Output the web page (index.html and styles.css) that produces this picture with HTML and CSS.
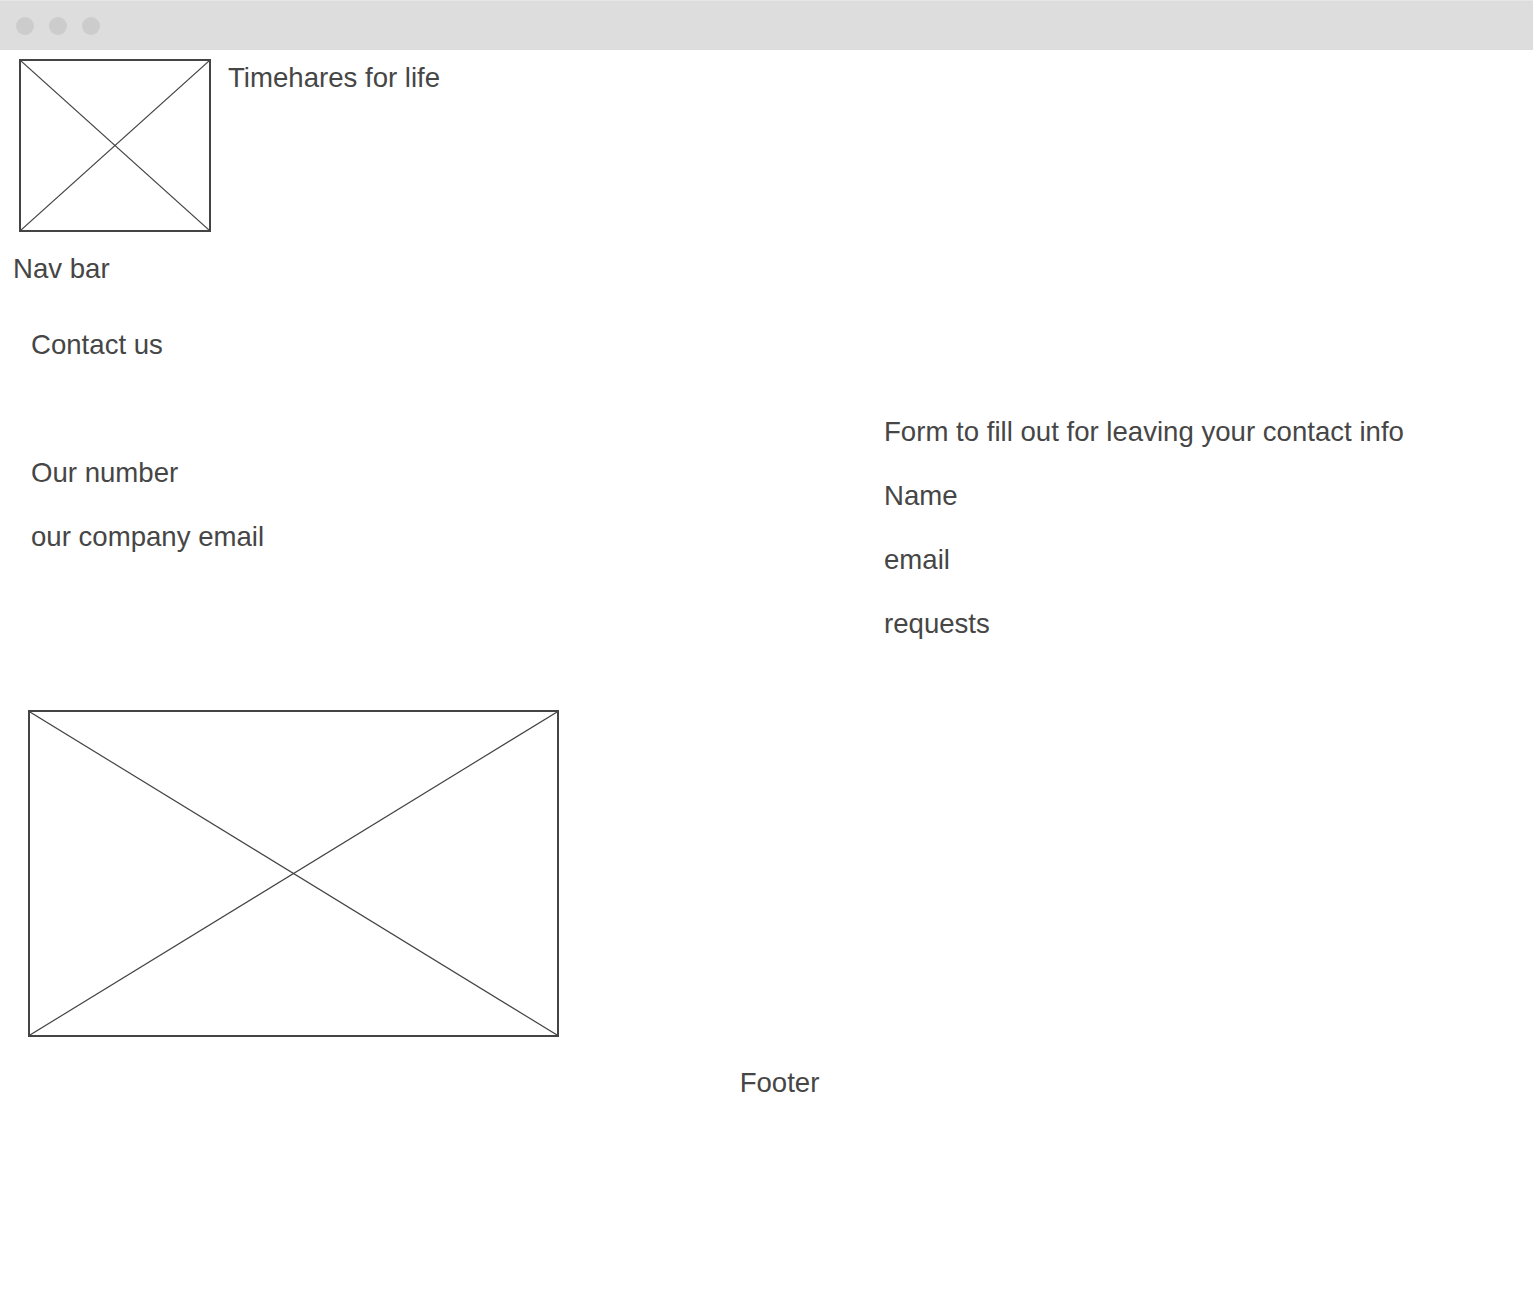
FILE: index.html
```html
<!DOCTYPE html>
<html lang="en">
<head>
<meta charset="utf-8">
<title>Timehares for life - Contact us</title>
<link rel="stylesheet" href="styles.css">
</head>
<body>
<div class="titlebar">
  <span class="dot"></span><span class="dot"></span><span class="dot"></span>
</div>
<header class="header">
  <div class="ph ph-logo">
    <svg viewBox="0 0 100 100" preserveAspectRatio="none"><line x1="0" y1="0" x2="100" y2="100" vector-effect="non-scaling-stroke"/><line x1="100" y1="0" x2="0" y2="100" vector-effect="non-scaling-stroke"/></svg>
  </div>
  <div class="title">Timehares for life</div>
</header>
<nav class="nav">Nav bar</nav>
<section class="contact">
  <div class="col-left">
    <div class="txt">Contact us</div>
    <div class="txt info-first">Our number</div>
    <div class="txt info">our company email</div>
  </div>
  <div class="col-right">
    <div class="txt">Form to fill out for leaving your contact info</div>
    <div class="txt info">Name</div>
    <div class="txt info">email</div>
    <div class="txt info">requests</div>
  </div>
</section>
<div class="ph ph-big">
  <svg viewBox="0 0 100 100" preserveAspectRatio="none"><line x1="0" y1="0" x2="100" y2="100" vector-effect="non-scaling-stroke"/><line x1="100" y1="0" x2="0" y2="100" vector-effect="non-scaling-stroke"/></svg>
</div>
<footer class="footer">Footer</footer>
</body>
</html>
```
FILE: styles.css
```css
html, body {
  margin: 0;
  padding: 0;
  background: #ffffff;
}
body {
  font-family: "Liberation Sans", Arial, sans-serif;
  font-size: 27.6px;
  line-height: 32px;
  color: #464646;
  min-height: 1294px;
}
.titlebar {
  height: 50px;
  background: #dddddd;
  border-top: 1px solid #e6e6e6;
  display: flex;
  align-items: center;
  gap: 15px;
  padding-left: 16px;
  box-sizing: border-box;
}
.dot {
  width: 18px;
  height: 18px;
  border-radius: 50%;
  background: #cccccc;
}
.header {
  display: flex;
  align-items: flex-start;
  padding: 9px 0 0 19px;
}
.ph {
  border: 2px solid #444444;
  box-sizing: border-box;
}
.ph svg {
  display: block;
  width: 100%;
  height: 100%;
}
.ph line {
  stroke: #444444;
  stroke-width: 1.2px;
}
.ph-logo {
  width: 192px;
  height: 173px;
}
.title {
  margin: 3px 0 0 17px;
}
.nav {
  margin-top: 21px;
  padding-left: 13px;
}
.contact {
  display: grid;
  grid-template-columns: 853px 1fr;
  padding-left: 31px;
  margin-top: 44px;
}
.txt {
  white-space: nowrap;
}
.info-first {
  margin-top: 96px;
}
.info {
  margin-top: 32px;
}
.col-right {
  margin-top: 87px;
}
.ph-big {
  width: 531px;
  height: 327px;
  margin: 70px 0 0 28px;
}
.footer {
  margin-top: 30px;
  padding-left: 26px;
  text-align: center;
}
```
